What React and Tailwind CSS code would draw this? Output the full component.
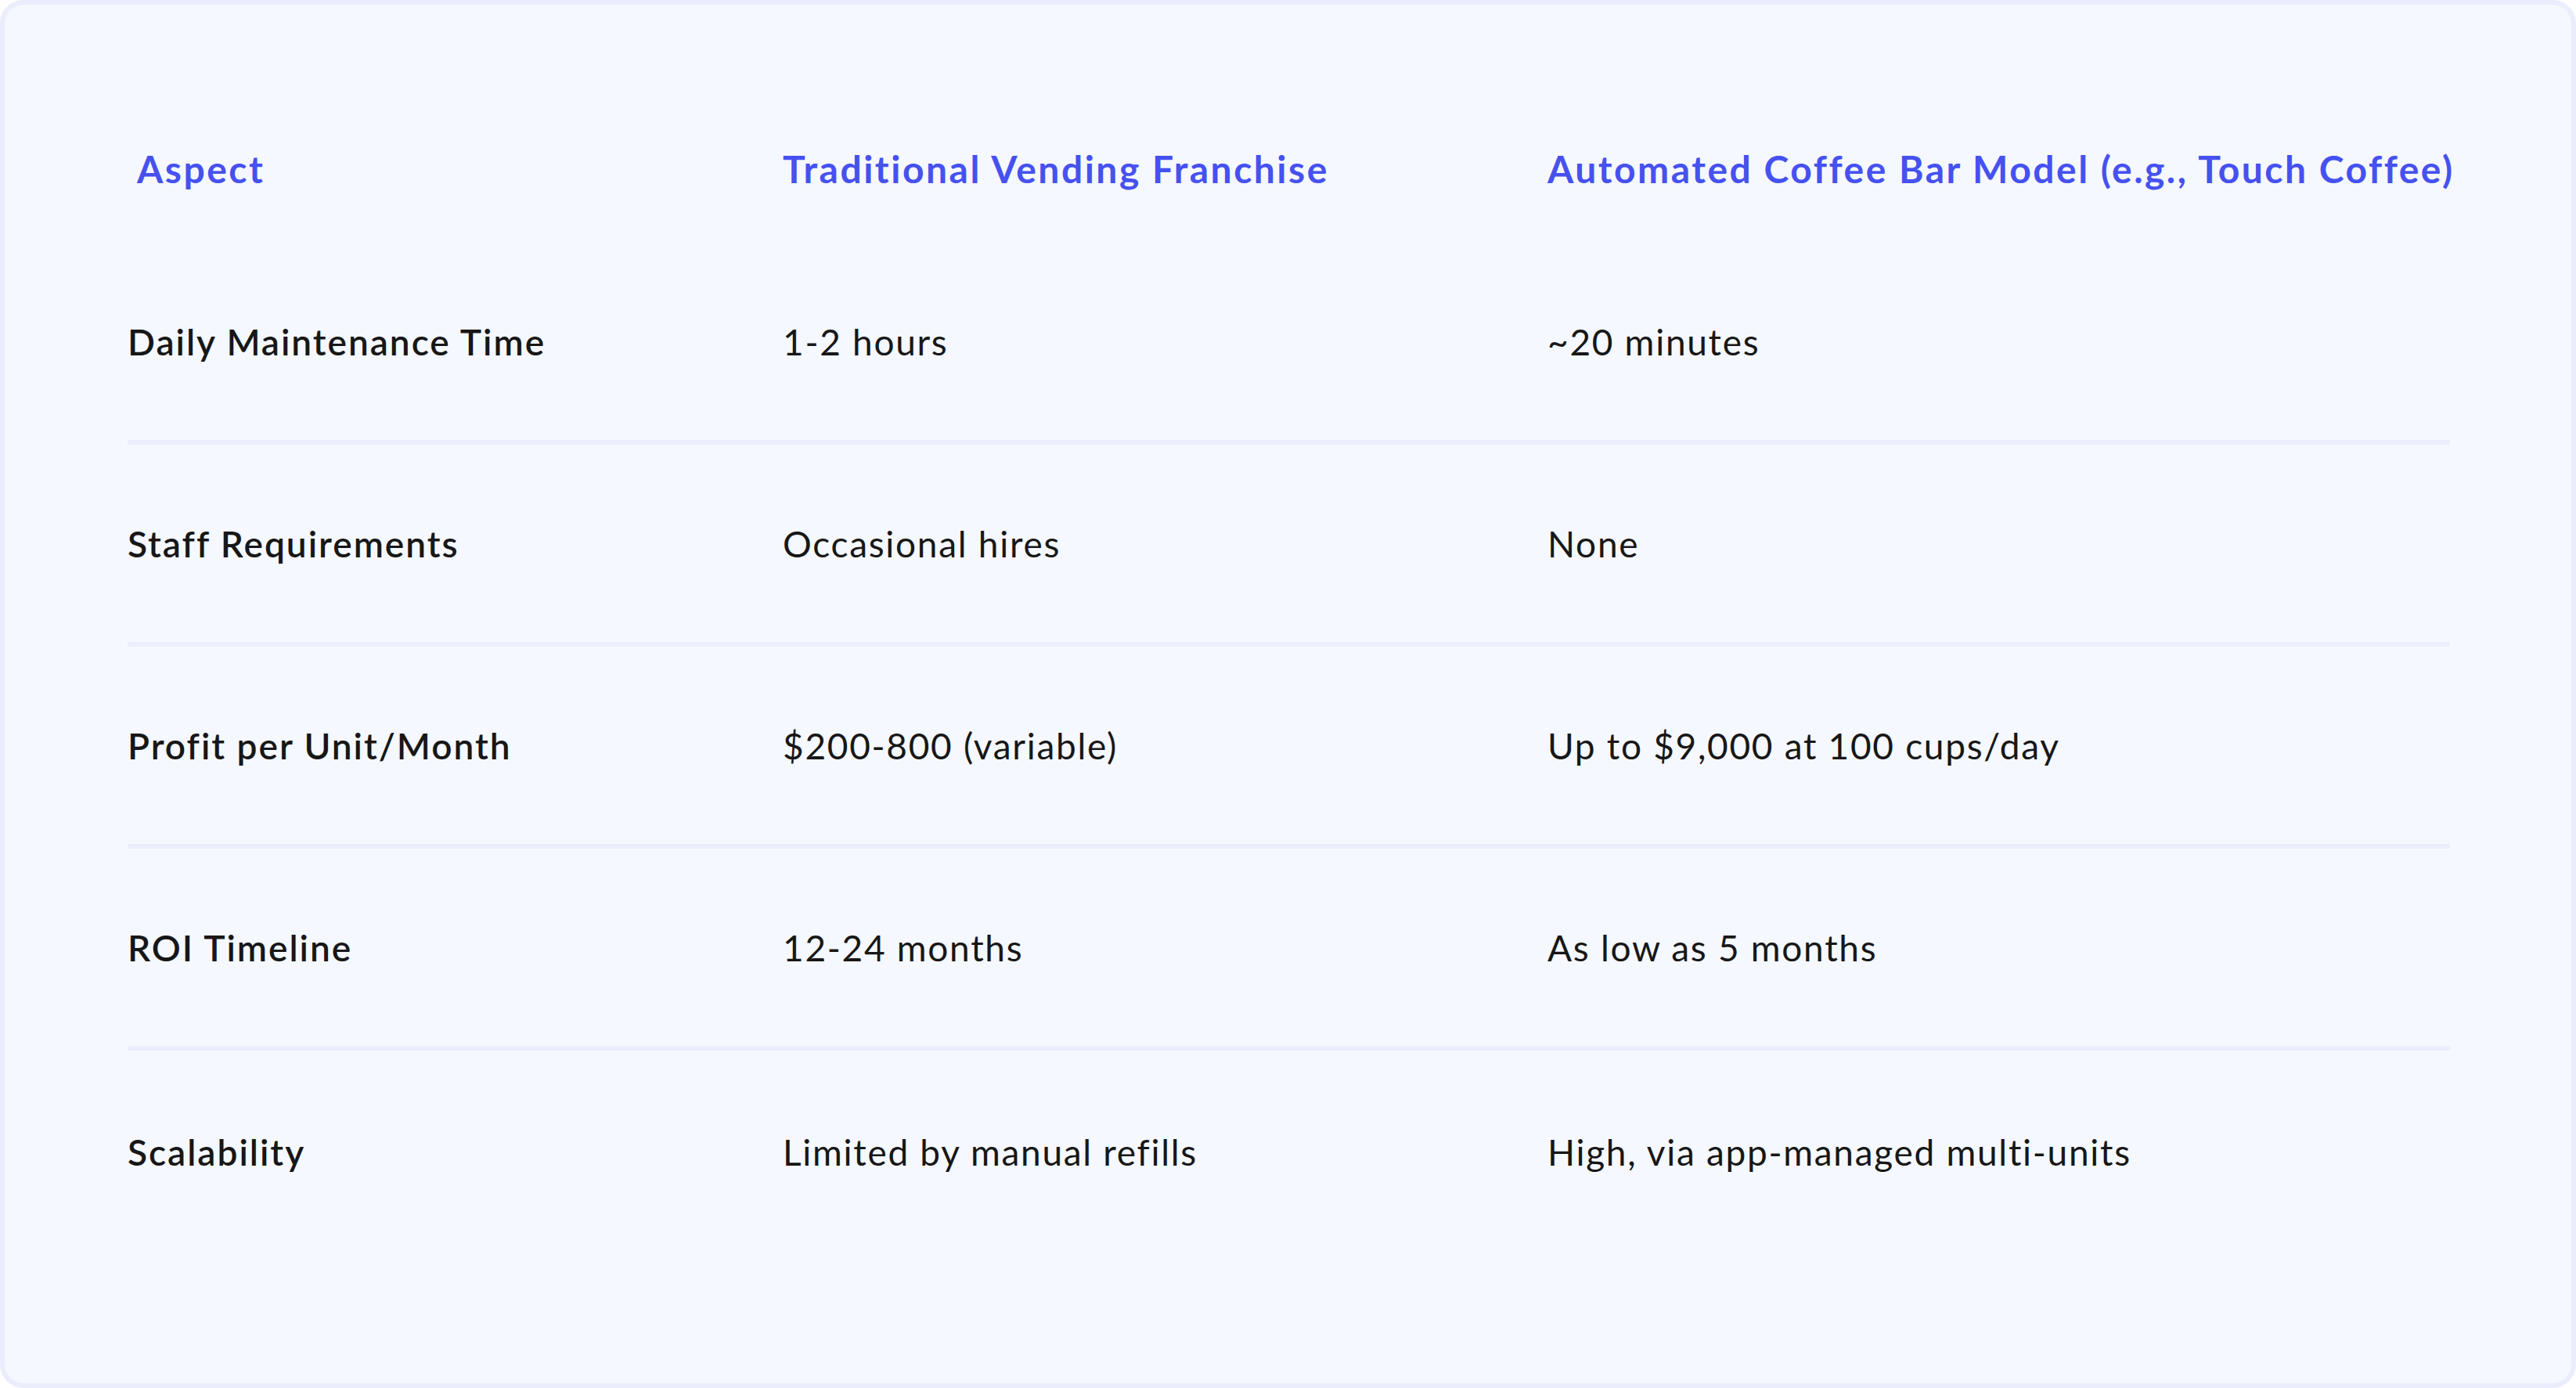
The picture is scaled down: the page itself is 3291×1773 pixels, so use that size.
import React from 'react';

// Comparison rows — first cell is the aspect label, rest are the two models.
const ROWS = [
  ['Daily Maintenance Time', '1-2 hours', '~20 minutes'],
  ['Staff Requirements', 'Occasional hires', 'None'],
  ['Profit per Unit/Month', '$200-800 (variable)', 'Up to $9,000 at 100 cups/day'],
  ['ROI Timeline', '12-24 months', 'As low as 5 months'],
  ['Scalability', 'Limited by manual refills', 'High, via app-managed multi-units'],
];

const HEADERS = ['Aspect', 'Traditional Vending Franchise', 'Automated Coffee Bar Model (e.g., Touch Coffee)'];

const GRID = 'grid grid-cols-[837px_977px_1fr]';

export default function App() {
  return (
    <div className="w-[3291px] h-[1773px] font-['Lato',sans-serif]">
      <div className="h-full rounded-[30px] border-[6px] border-[#ebedfd] bg-[#f5f8fe] pl-[157px] pr-[155px] pt-[116px]">
        {/* header */}
        <div className={`${GRID} h-[188px] items-center`}>
          {HEADERS.map((h, i) => (
            <div
              key={h}
              className={`text-[48px] font-bold tracking-[2.5px] text-[#4651f0] whitespace-nowrap ${i === 0 ? 'pl-[12px]' : ''}`}
            >
              {h}
            </div>
          ))}
        </div>

        {/* body */}
        {ROWS.map((row, r) => (
          <div
            key={row[0]}
            className={`${GRID} h-[258px] items-center ${r < ROWS.length - 1 ? 'border-b-[6px] border-[#ebeefd]' : ''}`}
          >
            {row.map((cell, c) => (
              <div
                key={c}
                className={`text-[46px] text-[#171717] whitespace-nowrap ${c === 0 ? 'font-semibold tracking-[2px]' : 'font-normal tracking-[1.7px]'}`}
              >
                {cell}
              </div>
            ))}
          </div>
        ))}
      </div>
    </div>
  );
}
